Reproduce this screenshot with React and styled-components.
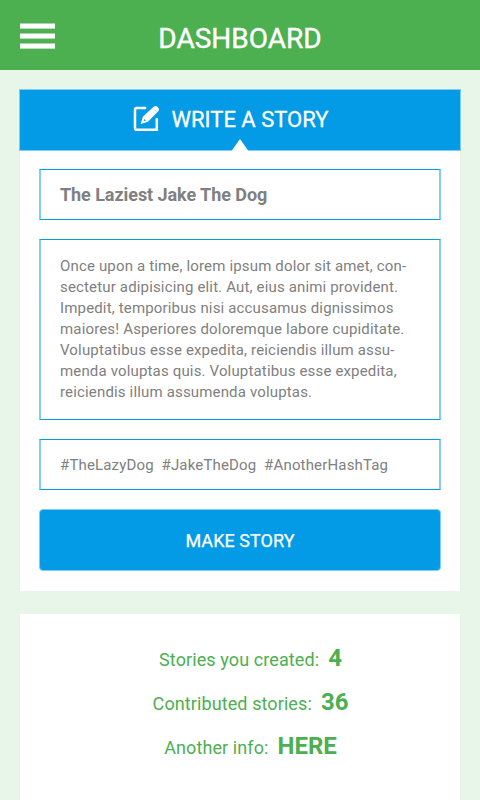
import React from "react";
import styled, { createGlobalStyle } from "styled-components";

const BLUE = "#039be5";
const BLUE_EDGE = "#81cdf2";
const GREEN = "#4caf50";

const GlobalStyle = createGlobalStyle`
  *, *::before, *::after { box-sizing: border-box; }
  html, body { margin: 0; padding: 0; background: #e8f5e9; }
  body { font-family: Roboto, "Liberation Sans", sans-serif; overflow: hidden; }
`;

const Screen = styled.div`
  display: flex;
  flex-direction: column;
  width: 480px;
  height: 800px;
  overflow: hidden;
  background: #e8f5e9;
`;

const TopBar = styled.header`
  display: grid;
  grid-template-columns: 35px 1fr 35px;
  align-items: center;
  flex: none;
  height: 70px;
  padding: 0 20px;
  background: ${GREEN};
`;

const MenuButton = styled.button`
  display: flex;
  flex-direction: column;
  gap: 4px;
  width: 35px;
  margin-top: 2px;
  padding: 0;
  border: 0;
  background: none;
`;

const MenuBar = styled.span`
  height: 6px;
  background: #fff;
  border-top: 1px solid #a6d7a8;
  border-bottom: 1px solid #b8dfb9;
`;

const PageTitle = styled.h1`
  margin: 8px 0 0;
  font-size: 28px;
  line-height: 34px;
  font-weight: 400;
  -webkit-text-stroke: 0.4px #fff;
  color: #fff;
  text-align: center;
  white-space: nowrap;
`;

const StoryCard = styled.section`
  flex: none;
  width: 440px;
  height: 502px;
  margin: 19px 0 0 20px;
  background: #fff;
`;

const CardHeader = styled.div`
  position: relative;
  display: flex;
  justify-content: center;
  gap: 12px;
  width: 442px;
  height: 62px;
  margin-left: -1px;
  padding: 15px 19px 0 0;
  background: ${BLUE};
  border: 1px solid ${BLUE_EDGE};
`;

const Notch = styled.svg`
  position: absolute;
  left: 211px;
  bottom: -1px;
  width: 18px;
  height: 12px;
`;

const CardTitle = styled.h2`
  margin: 1px 0 0;
  font-size: 22px;
  line-height: 28px;
  font-weight: 400;
  -webkit-text-stroke: 0.3px #fff;
  color: #fff;
  white-space: nowrap;
`;

const Form = styled.form`
  display: flex;
  flex-direction: column;
  width: 402px;
  margin: 18px 0 0 19px;
`;

const Field = styled.div`
  height: ${(p) => p.$height}px;
  margin-bottom: 19px;
  padding: ${(p) => p.$top}px 0 0 19px;
  border: 1px solid ${BLUE};
  border-width: 1px 2px;
  border-left-color: ${BLUE_EDGE};
  border-right-color: ${BLUE_EDGE};
  color: #808080;
  white-space: pre;
  font-size: ${(p) => p.$size}px;
  line-height: 21px;
  font-weight: ${(p) => p.$weight || 400};
  letter-spacing: ${(p) => p.$spacing || 0}px;
`;

const SubmitButton = styled.button`
  height: 62px;
  padding: 1px 0 0;
  border: 1px solid ${BLUE_EDGE};
  border-radius: 4px;
  background: ${BLUE};
  color: #fff;
  font: 400 18px/24px Roboto, "Liberation Sans", sans-serif;
  letter-spacing: 0.05px;
  -webkit-text-stroke: 0.25px #fff;
`;

const StatsCard = styled.section`
  flex: none;
  display: flex;
  flex-direction: column;
  align-items: center;
  width: 440px;
  height: 200px;
  margin: 23px 0 0 20px;
  padding: 22px 0 0 21px;
  background: #fff;
  color: ${GREEN};
`;

const Stat = styled.div`
  display: flex;
  align-items: baseline;
  gap: 9px;
  height: 44px;
  line-height: 44px;
  font-size: 18px;
  letter-spacing: 0.1px;
  white-space: nowrap;
`;

const StatValue = styled.strong`
  font-size: 24px;
  font-weight: 700;
  letter-spacing: 0;
`;

const STORY = [
  "Once upon a time, lorem ipsum dolor sit amet, con-",
  "sectetur adipisicing elit. Aut, eius animi provident.",
  "Impedit, temporibus nisi accusamus dignissimos",
  "maiores! Asperiores doloremque labore cupiditate.",
  "Voluptatibus esse expedita, reiciendis illum assu-",
  "menda voluptas quis. Voluptatibus esse expedita,",
  "reiciendis illum assumenda voluptas.",
].join("\n");

const STATS = [
  ["Stories you created:", "4"],
  ["Contributed stories:", "36"],
  ["Another info:", "HERE"],
];

function EditIcon() {
  return (
    <svg width="27" height="27" viewBox="0 0 27 27" fill="none" aria-hidden="true">
      <path d="M13.2 3.1H3.9Q2 3.1 2 5V22.9Q2 24.8 3.9 24.8H23.8V13.2" stroke="#fff" strokeWidth="2.5" />
      <path
        fillRule="evenodd"
        d="M7.7 18.9 9.8 11.7 20.9 1.5Q22.7 0.1 24.8 1.9Q27 3.9 25.7 5.8L15 16.7ZM10.6 16.2 12.9 15.4 11.4 13.9Z"
        fill="#fff"
      />
      <path d="M20.3 3.8 23.4 6.9" stroke={BLUE} strokeOpacity="0.45" strokeWidth="0.7" />
    </svg>
  );
}

export default function App() {
  return (
    <Screen>
      <GlobalStyle />
      <TopBar>
        <MenuButton aria-label="Menu">
          <MenuBar /><MenuBar /><MenuBar />
        </MenuButton>
        <PageTitle>DASHBOARD</PageTitle>
      </TopBar>
      <StoryCard>
        <CardHeader>
          <EditIcon />
          <CardTitle>WRITE A STORY</CardTitle>
          <Notch viewBox="0 0 18 12"><path d="M9 0 17.5 12H0.5Z" fill="#fff" /></Notch>
        </CardHeader>
        <Form>
          <Field $height={51} $top={14} $size={18} $weight={700} $spacing={-0.06}>The Laziest Jake The Dog</Field>
          <Field $height={181} $top={16} $size={15} $spacing={0.16}>{STORY}</Field>
          <Field $height={51} $top={15} $size={15} $spacing={0.16}>{"#TheLazyDog  #JakeTheDog  #AnotherHashTag"}</Field>
          <SubmitButton type="button">MAKE STORY</SubmitButton>
        </Form>
      </StoryCard>
      <StatsCard>
        {STATS.map(([label, value]) => (
          <Stat key={label}>
            <span>{label}</span>
            <StatValue>{value}</StatValue>
          </Stat>
        ))}
      </StatsCard>
    </Screen>
  );
}
